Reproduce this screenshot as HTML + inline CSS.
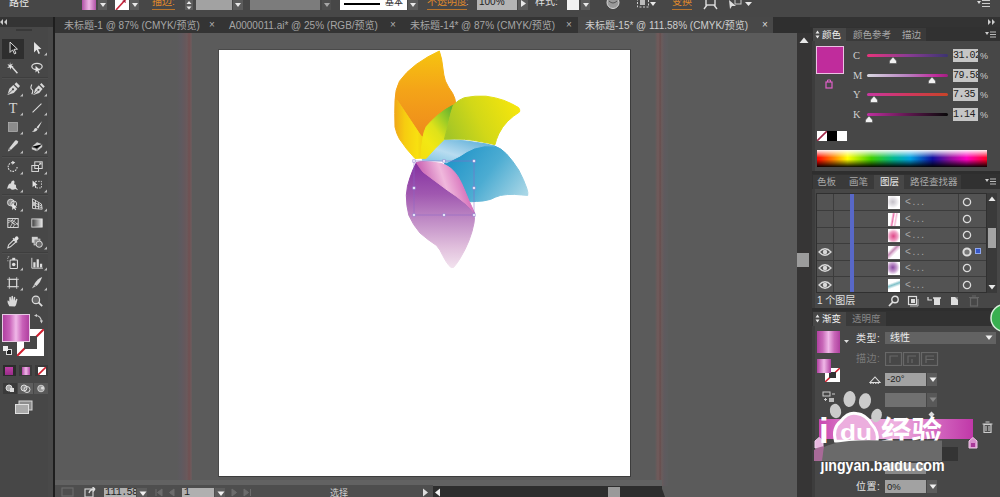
<!DOCTYPE html>
<html lang="zh">
<head>
<meta charset="utf-8">
<title>Illustrator</title>
<style>
html,body{margin:0;padding:0;}
body{width:1000px;height:497px;overflow:hidden;position:relative;background:#5b5b5b;font-family:"Liberation Sans","Noto Sans CJK SC",sans-serif;font-size:11px;color:#d6d6d6;}
.abs{position:absolute;}
#ctrl{left:0;top:0;width:1000px;height:17px;background:#474747;}
#tabs{left:54px;top:17px;width:746px;height:16px;background:#343434;}
#tools{left:0;top:17px;width:48px;height:480px;background:#474747;border-right:5px solid #494949;}
#toolsTop{left:0;top:17px;width:53px;height:10px;background:#343434;}
#tooldiv{left:52.5px;top:17px;width:2.5px;height:480px;background:#1e1e1e;}
#canvas{left:55px;top:33px;width:742px;height:452px;background:#5b5b5b;}
#artboard{left:218px;top:49px;width:411px;height:426px;background:#fff;border:1px solid #3c3c3c;border-left-color:#4a4a4a;border-top-color:#4a4a4a;}
.guide{width:10px;top:33px;height:453px;}
#status{left:55px;top:485px;width:607px;height:12px;background:#2e2e2e;}
#vscroll{left:797px;top:33px;width:15px;height:464px;background:#363535;}
#right{left:812px;top:17px;width:188px;height:480px;background:#474747;}
.tab{top:17.5px;height:15px;line-height:16px;font-size:10px;color:#a6a6a6;white-space:nowrap;}

.cb{position:absolute;top:0;height:10px;}
.dd{position:absolute;top:0;height:10px;background:#5c5c5c;}
.dd:after{content:"";position:absolute;left:50%;top:3px;margin-left:-3px;border-left:3px solid transparent;border-right:3px solid transparent;border-top:4px solid #e8e8e8;}
.org{position:absolute;top:-5px;height:14px;line-height:14px;font-size:10px;color:#e08a2c;white-space:nowrap;border-bottom:1px solid #b8742c;}
.ctl{position:absolute;top:-5px;height:14px;line-height:14px;font-size:10px;color:#e0e0e0;white-space:nowrap;}
.tabx{position:absolute;top:17px;height:15px;line-height:16px;font-size:10px;color:#b0b0b0;}

.pt{position:absolute;font-size:9.5px;line-height:13px;height:13px;white-space:nowrap;color:#a8a8a8;}
.pt.on{color:#f0f0f0;}
.sl{position:absolute;left:867px;width:81px;height:3px;border-radius:2px;}
.vb{position:absolute;left:953px;width:25px;height:13px;background:#c6c6c6;color:#222;font-size:10px;line-height:13px;overflow:hidden;white-space:nowrap;font-family:"Liberation Mono","Noto Sans CJK SC",monospace;letter-spacing:-0.5px;}
.lab{position:absolute;left:853px;font-size:10.5px;line-height:12px;color:#cfcfcf;font-weight:normal;font-family:"Liberation Serif","Noto Serif CJK SC",serif;}
.pc{position:absolute;left:980px;font-size:9px;line-height:12px;color:#ccc;}
.hd{position:absolute;width:0;height:0;}
</style>
</head>
<body>
<div id="canvas" class="abs"></div>
<div class="abs guide" style="left:177px;width:16px;background:linear-gradient(90deg,#5b5b5b 0%,#5e5a60 25%,#66585c 50%,#6a5a5c 62%,#705052 76%,#6e5a5c 88%,#5b5b5b 97%);"></div>
<div class="abs guide" style="left:655px;width:14px;background:linear-gradient(90deg,#5b5b5b 0%,#6e5a5a 16%,#6e5a5a 26%,#684e4e 37%,#6a5c5c 48%,#605a5e 65%,#5c5c5e 85%,#5b5b5b 100%);"></div>
<div id="artboard" class="abs"></div>
<!--ART-->
<svg class="abs" style="left:380px;top:40px" width="170" height="240" viewBox="380 40 170 240">
<defs>
<linearGradient id="gOr" x1="0" y1="0" x2="0" y2="1"><stop offset="0" stop-color="#f6c410"/><stop offset="0.45" stop-color="#f4a418"/><stop offset="1" stop-color="#ee8a1c"/></linearGradient>
<linearGradient id="gYf" x1="0" y1="0" x2="1" y2="0"><stop offset="0" stop-color="#f0a818"/><stop offset="0.35" stop-color="#f6cc10"/><stop offset="0.8" stop-color="#f8e010"/><stop offset="1" stop-color="#f0d010"/></linearGradient>
<linearGradient id="gGr" x1="0" y1="0.6" x2="1" y2="0.3"><stop offset="0" stop-color="#a4c626"/><stop offset="0.45" stop-color="#d2d818"/><stop offset="1" stop-color="#f6e60c"/></linearGradient>
<linearGradient id="gGf" x1="0.9" y1="0" x2="0.1" y2="1"><stop offset="0" stop-color="#62b030"/><stop offset="0.25" stop-color="#9ccc26"/><stop offset="0.5" stop-color="#dee21a"/><stop offset="0.75" stop-color="#f2e814"/><stop offset="1" stop-color="#f4e010"/></linearGradient>
<linearGradient id="gBl" x1="0" y1="0.3" x2="1" y2="0.8"><stop offset="0" stop-color="#2094c8"/><stop offset="0.5" stop-color="#4cacd2"/><stop offset="1" stop-color="#a8d6e6"/></linearGradient>
<linearGradient id="gBf" x1="0" y1="1" x2="1" y2="0"><stop offset="0" stop-color="#78c0e0"/><stop offset="0.4" stop-color="#b8dcf0"/><stop offset="1" stop-color="#50a8d4"/></linearGradient>
<linearGradient id="gPu" x1="0" y1="0" x2="0" y2="1"><stop offset="0" stop-color="#8430a0"/><stop offset="0.3" stop-color="#a058b0"/><stop offset="0.55" stop-color="#c08cc6"/><stop offset="0.8" stop-color="#e0bedc"/><stop offset="1" stop-color="#f2e2ee"/></linearGradient>
<linearGradient id="gPk" x1="0" y1="0.6" x2="1" y2="0.3"><stop offset="0" stop-color="#b83ca0"/><stop offset="0.5" stop-color="#f0b8dc"/><stop offset="1" stop-color="#c848a8"/></linearGradient>
</defs>
<!-- blue face -->
<path d="M446 163 Q452 160 460 156 Q467 151 474.5 148 Q485 144.5 494.5 146 Q501 148 506.6 154 Q513 161 518.7 170 Q524 180 526.7 188 Q528.5 193 527.7 195.4 Q522 195 514.6 194.4 Q507 194.2 500.5 195.4 Q495 197 490.5 199.4 Q483 201.5 476.4 201.4 Q471 202 468.5 201.5 Q465 196 462.5 190.4 Q459.5 183 456.5 177 Q454 171.5 451 168.5 L444 164 Z" fill="url(#gBl)" stroke="url(#gBl)" stroke-width="1" stroke-linejoin="round"/>
<!-- blue fold -->
<path d="M422 160 Q426 154 432 148 Q438 142 444.2 140 Q455 139.5 466.3 141 Q477 142.5 486.5 144 L494.5 146 Q485 144.5 474.5 148 Q467 151 460 156 Q452 160 446 163 L444 161 Z" fill="url(#gBf)" stroke="url(#gBf)" stroke-width="1" stroke-linejoin="round"/>
<!-- orange -->
<path d="M439.3 51 Q428 56 416.4 64.3 Q406 72 399.5 81.2 Q395 90 395 100.5 L397 100 L421 136 L424 137 L431 125 Q443 114 456 106 Q455.5 98 452.6 93.3 Q448 87 445.4 81 Q443.5 75 443 69 Q442 58 439.3 51 Z" fill="url(#gOr)" stroke="url(#gOr)" stroke-width="1" stroke-linejoin="round"/>
<!-- yellow fold -->
<path d="M395 100.5 Q394.5 113 395 127 Q396.5 134 399.5 139 Q406 149 415 158.5 L423 158 L423 137 L421 136 L397 100 Z" fill="url(#gYf)" stroke="url(#gYf)" stroke-width="1" stroke-linejoin="round"/>
<!-- green fold -->
<path d="M453.4 105 Q445 109 437 115.8 Q431 121 426.3 126.6 Q423.5 132 422.7 139.3 Q421 148 421 158 L426 158.5 Q434 149 444.4 139.3 Q447 130 449 121 Q451 112 453.4 105 Z" fill="url(#gGf)" stroke="url(#gGf)" stroke-width="1" stroke-linejoin="round"/>
<!-- green face -->
<path d="M453.4 105 Q458 100 464.3 97.7 Q475 95.5 486 96.2 Q496 97.5 504 100.4 Q512 103.5 518.6 107.6 Q520.5 110 519.5 112 Q513 116 507.7 121.2 Q502 127 498.7 134 Q496 140 495 144.7 Q489 143 482.4 142 Q473 140 464.3 139.3 Q454 138.8 444.4 139.3 Q447 130 449 121 Q451 112 453.4 105 Z" fill="url(#gGr)" stroke="url(#gGr)" stroke-width="1" stroke-linejoin="round"/>
<!-- purple -->
<path d="M416.4 162.6 Q412.5 170 410 177.6 Q406.8 186 406.3 195.2 Q406.3 206 408.8 215.3 Q413 225 420 233 Q428 240 436.5 245.5 Q440.5 250 442.7 255.5 Q446 262 449 265.6 Q451 268.5 453.5 267.5 Q457.5 263 460.3 258 Q465.5 249.5 469 240.5 Q472.5 231.5 474 222.9 Q474.8 217 474.4 213 Q470 207.5 465.3 203.3 Q456.5 196 447.2 190 Q435 181 423 172 Q419 167 416.4 162.6 Z" fill="url(#gPu)" stroke="url(#gPu)" stroke-width="1" stroke-linejoin="round"/>
<!-- pink fold -->
<path d="M416.4 162.6 Q419 161.6 423 161.6 Q433 161.8 441.2 163.4 Q446.5 165 450.8 168.3 Q455 172 458 176.7 Q461.5 182.5 464 188.8 Q466.5 195 469 200.8 Q472 207 474.4 213 Q470 207.5 465.3 203.3 Q456.5 196 447.2 190 Q435 181 423 172 Q419 167 416.4 162.6 Z" fill="url(#gPk)" stroke="url(#gPk)" stroke-width="1" stroke-linejoin="round"/>
<!-- selection -->
<rect x="414" y="161" width="60" height="54" fill="none" stroke="#8a68c8" stroke-width="0.7" stroke-opacity="0.75"/>
<g fill="#fff" stroke="#8a7ad0" stroke-width="0.7" stroke-opacity="0.8"><rect x="412.8" y="159.8" width="2.4" height="2.4"/><rect x="442.8" y="159.8" width="2.4" height="2.4"/><rect x="472.8" y="159.8" width="2.4" height="2.4"/><rect x="412.8" y="186.8" width="2.4" height="2.4"/><rect x="472.8" y="186.8" width="2.4" height="2.4"/><rect x="412.8" y="213.8" width="2.4" height="2.4"/><rect x="442.8" y="213.8" width="2.4" height="2.4"/><rect x="472.8" y="213.8" width="2.4" height="2.4"/></g>
</svg>
<!--/ART-->
<div id="ctrl" class="abs">
<div class="ctl" style="left:9px;top:-4px;font-size:10px;color:#ececec;">路径</div>
<div class="cb" style="left:82px;width:14px;background:linear-gradient(90deg,#b052a6 0%,#f0b6e6 50%,#b052a6 100%);"></div>
<div class="dd" style="left:98px;width:9px;"></div>
<div class="cb" style="left:115px;width:14px;background:#fff;overflow:hidden;"><svg width="14" height="10" viewBox="0 0 14 10" style="position:absolute;left:0;top:0"><line x1="1" y1="10" x2="11" y2="-1" stroke="#c8283c" stroke-width="1.6"/><path d="M7 1 L10 0 L11 3 Z" fill="#a01838"/></svg></div>
<div class="dd" style="left:130px;width:9px;"></div>
<div class="org" style="left:152px;">描边:</div>
<div class="cb" style="left:185px;width:8px;background:#5c5c5c;"><svg width="8" height="10" style="position:absolute;left:0;top:0"><path d="M1.5 4 L4 1 L6.5 4 Z M1.5 6.5 L4 9.5 L6.5 6.5 Z" fill="#e8e8e8"/></svg></div>
<div class="cb" style="left:196px;width:36px;background:#a2a2a2;"></div>
<div class="dd" style="left:233px;width:10px;"></div>
<div class="cb" style="left:250px;width:70px;background:#7c7c7c;"></div>
<div class="dd" style="left:322px;width:9px;background:#555;opacity:.6"></div>
<div class="cb" style="left:340px;width:67px;background:#fff;"><div style="position:absolute;left:4px;top:3px;width:36px;height:2px;background:#000"></div><div style="position:absolute;left:45px;top:-5px;font-size:9px;line-height:14px;color:#222;white-space:nowrap;">基本</div></div>
<div class="dd" style="left:408px;width:10px;"></div>
<div class="org" style="left:427px;">不透明度</div><div class="ctl" style="left:466px;color:#bbb">:</div>
<div class="cb" style="left:477px;width:40px;background:#b4b4b4;"><div style="position:absolute;left:2px;top:-5px;font-size:10px;line-height:14px;color:#222;">100%</div></div>
<div class="cb" style="left:518px;width:10px;background:#5c5c5c;"><svg width="10" height="10" style="position:absolute;left:0;top:0"><path d="M3 0 L8 3.5 L3 7 Z" fill="#e8e8e8"/></svg></div>
<div class="ctl" style="left:535px;">样式:</div>
<div class="cb" style="left:567px;width:12px;background:#f2f2f2;"></div>
<div class="dd" style="left:581px;width:9px;"></div>
<svg class="abs" style="left:606px;top:0" width="14" height="10"><circle cx="7" cy="2.5" r="6" fill="#9a9a9a" stroke="#d8d8d8" stroke-width="1"/><path d="M3 1 Q7 5 11 1" stroke="#555" fill="none"/></svg>
<svg class="abs" style="left:636px;top:0" width="22" height="10"><rect x="1.5" y="-3" width="11" height="10" fill="none" stroke="#d0d0d0" stroke-dasharray="2 1.5"/><rect x="4" y="0" width="5" height="5" fill="#bbb"/><path d="M14 2 L20 2 L17 6 Z" fill="#e8e8e8"/></svg>
<div class="org" style="left:672px;">变换</div>
<svg class="abs" style="left:703px;top:0" width="16" height="10"><rect x="3" y="-3" width="9" height="8" fill="none" stroke="#ddd" stroke-width="1.4"/><path d="M1 9 L4 5 M14 9 L11 5" stroke="#ddd" stroke-width="1.4"/></svg>
<svg class="abs" style="left:727px;top:0" width="28" height="10"><path d="M2 0 L9 6 L5 6 L3 9 Z" fill="#ddd"/><rect x="8" y="-2" width="6" height="6" fill="none" stroke="#ccc"/><path d="M18 2 L25 2 L21.5 6 Z" fill="#e8e8e8"/></svg>
<svg class="abs" style="left:977px;top:-1px" width="14" height="10"><path d="M0 2 L4 2 L2 5 Z" fill="#ddd"/><path d="M5 1.5 H13 M5 4.5 H13 M5 7.5 H13" stroke="#ccc" stroke-width="1"/></svg>
</div>
<div id="tabs" class="abs"></div>
<div class="abs" style="left:578px;top:17px;width:195px;height:16px;background:#484848;"></div>
<div class="abs" style="left:773px;top:17px;width:39px;height:16px;background:#2f2f2f;"></div>
<div class="tab abs" style="left:64px;">未标题-1 @ 87% (CMYK/预览)</div><div class="tabx" style="left:209px;">×</div>
<div class="tab abs" style="left:229px;">A0000011.ai* @ 25% (RGB/预览)</div><div class="tabx" style="left:390px;">×</div>
<div class="tab abs" style="left:410px;">未标题-14* @ 87% (CMYK/预览)</div><div class="tabx" style="left:566px;">×</div>
<div class="tab abs" style="left:585px;color:#cfcfcf">未标题-15* @ 111.58% (CMYK/预览)</div><div class="tabx" style="left:762px;color:#dcdcdc">×</div>

<div id="tools" class="abs"></div>
<div id="toolsTop" class="abs"></div>
<div id="tooldiv" class="abs"></div>
<!--TOOLS-->
<svg class="abs" style="left:0;top:19px" width="8" height="6"><path d="M3 0 L0 3 L3 6 Z M7 0 L4 3 L7 6 Z" fill="#ccc"/></svg>
<div class="abs" style="left:2px;top:77px;width:46px;height:1px;background:#3e3e3e;"></div><div class="abs" style="left:2px;top:78px;width:46px;height:1px;background:#4e4e4e;"></div><div class="abs" style="left:2px;top:156px;width:46px;height:1px;background:#3e3e3e;"></div><div class="abs" style="left:2px;top:157px;width:46px;height:1px;background:#4e4e4e;"></div><div class="abs" style="left:2px;top:194px;width:46px;height:1px;background:#3e3e3e;"></div><div class="abs" style="left:2px;top:195px;width:46px;height:1px;background:#4e4e4e;"></div><div class="abs" style="left:2px;top:252px;width:46px;height:1px;background:#3e3e3e;"></div><div class="abs" style="left:2px;top:253px;width:46px;height:1px;background:#4e4e4e;"></div>
<div class="abs" style="left:2px;top:39px;width:22px;height:20px;background:#2e2e2e;"></div>
<div class="abs" style="left:16px;top:29px;width:16px;height:2px;background:#383838;"></div>
<svg class="abs" style="left:3px;top:39.0px" width="22" height="19" viewBox="0 0 22 19"><g transform="translate(10 9) scale(0.74) translate(-10 -9)"><path d="M6 1 L6 15 L9.5 11.5 L12 17 L14 16 L11.5 10.8 L16 10.5 Z" fill="#222" stroke="#f0f0f0" stroke-width="1.2"/></g></svg>
<svg class="abs" style="left:27px;top:39.0px" width="22" height="19" viewBox="0 0 22 19"><g transform="translate(10 9) scale(0.74) translate(-10 -9)"><path d="M6 1 L6 15 L9.5 11.5 L12 17 L14 16 L11.5 10.8 L16 10.5 Z" fill="#e4e4e4"/></g><path d="M20 13.5 L20 16.5 L17 16.5 Z" fill="#bdbdbd"/></svg>
<svg class="abs" style="left:3px;top:59.0px" width="22" height="19" viewBox="0 0 22 19"><g transform="translate(10 9) scale(0.74) translate(-10 -9)"><path d="M8 7 L16 16" stroke="#ddd" stroke-width="2"/><path d="M6 1 L6.8 4.5 L10 3 L8 6 L11 7.5 L7.5 8 L7 11.5 L5.5 8.3 L2 9 L4.5 6.5 L2.5 3.5 L5.5 4.8 Z" fill="#e4e4e4"/></g></svg>
<svg class="abs" style="left:27px;top:59.0px" width="22" height="19" viewBox="0 0 22 19"><g transform="translate(10 9) scale(0.74) translate(-10 -9)"><ellipse cx="10" cy="7" rx="7" ry="4.2" fill="none" stroke="#ddd" stroke-width="1.6"/><path d="M8 6 L8 15 L10.3 12.8 L12 16.5 L13.5 15.8 L11.8 12.2 L14.5 12 Z" fill="#e4e4e4"/></g></svg>
<svg class="abs" style="left:3px;top:80.0px" width="22" height="19" viewBox="0 0 22 19"><g transform="translate(10 9) scale(0.74) translate(-10 -9)"><path d="M2.5 17 L5 8.5 L10.5 3.5 L16 9 L11 14.5 Z" fill="#d8d8d8"/><path d="M12 2.5 L14.5 0 L19.5 5 L17 7.5 Z" fill="#d8d8d8"/><path d="M3.5 16 L9 10.5" stroke="#474747" stroke-width="1.1"/><circle cx="10" cy="9.5" r="1.5" fill="#474747"/></g><path d="M20 13.5 L20 16.5 L17 16.5 Z" fill="#bdbdbd"/></svg>
<svg class="abs" style="left:27px;top:80.0px" width="22" height="19" viewBox="0 0 22 19"><g transform="translate(10 9) scale(0.74) translate(-10 -9)"><path d="M5 17 L7.5 9 L12.5 4 L17.5 9 L13 14.5 Z" fill="#d8d8d8"/><path d="M14 3 L16 1 L20.5 5.5 L18.5 7.5 Z" fill="#d8d8d8"/><path d="M6 16 L11 11" stroke="#474747" stroke-width="1.1"/><circle cx="12" cy="10" r="1.4" fill="#474747"/><path d="M3 3 Q0.5 8 3 9.5 Q5.5 11 3 16" stroke="#ddd" stroke-width="1.5" fill="none"/></g><path d="M20 13.5 L20 16.5 L17 16.5 Z" fill="#bdbdbd"/></svg>
<svg class="abs" style="left:3px;top:99.0px" width="22" height="19" viewBox="0 0 22 19"><g transform="translate(10 9) scale(0.74) translate(-10 -9)"><text x="10" y="15.5" font-family="Liberation Serif,serif" font-size="19" fill="#d4d4d4" text-anchor="middle">T</text></g><path d="M20 13.5 L20 16.5 L17 16.5 Z" fill="#bdbdbd"/></svg>
<svg class="abs" style="left:27px;top:99.0px" width="22" height="19" viewBox="0 0 22 19"><g transform="translate(10 9) scale(0.74) translate(-10 -9)"><path d="M4 15 L16 3" stroke="#ddd" stroke-width="1.4"/></g><path d="M20 13.5 L20 16.5 L17 16.5 Z" fill="#bdbdbd"/></svg>
<svg class="abs" style="left:3px;top:118.0px" width="22" height="19" viewBox="0 0 22 19"><g transform="translate(10 9) scale(0.74) translate(-10 -9)"><rect x="4" y="3" width="12" height="12" fill="#8c8c8c" stroke="#b4b4b4" stroke-width="1"/></g><path d="M20 13.5 L20 16.5 L17 16.5 Z" fill="#bdbdbd"/></svg>
<svg class="abs" style="left:27px;top:118.0px" width="22" height="19" viewBox="0 0 22 19"><g transform="translate(10 9) scale(0.74) translate(-10 -9)"><path d="M17 1 L9.5 9.5 L11.5 11.2 Z" fill="#e4e4e4"/><path d="M9 10.3 L10.8 12 Q9 16 3 15.5 Q6.5 14 6.5 11.5 Q7.5 10 9 10.3 Z" fill="#d8d8d8"/></g><path d="M20 13.5 L20 16.5 L17 16.5 Z" fill="#bdbdbd"/></svg>
<svg class="abs" style="left:3px;top:137.0px" width="22" height="19" viewBox="0 0 22 19"><g transform="translate(10 9) scale(0.74) translate(-10 -9)"><path d="M13 1.5 Q15 0.5 16.5 2.5 Q17.5 4 16 5.5 L7 14.5 L3 16.5 L4.5 12.5 Z" fill="#d8d8d8"/><path d="M4.5 12.5 L7 14.5" stroke="#474747"/></g><path d="M20 13.5 L20 16.5 L17 16.5 Z" fill="#bdbdbd"/></svg>
<svg class="abs" style="left:27px;top:137.0px" width="22" height="19" viewBox="0 0 22 19"><g transform="translate(10 9) scale(0.74) translate(-10 -9)"><path d="M3 10 L10 4 L17 6.5 L17 10.5 L10 16 L3 13.5 Z" fill="#d0d0d0"/><path d="M3 10 L10 12.5 L17 6.5 M10 12.5 L10 16" stroke="#474747" stroke-width="1"/></g><path d="M20 13.5 L20 16.5 L17 16.5 Z" fill="#bdbdbd"/></svg>
<svg class="abs" style="left:3px;top:157.5px" width="22" height="19" viewBox="0 0 22 19"><g transform="translate(10 9) scale(0.74) translate(-10 -9)"><path d="M15.5 9 A6 6 0 1 1 10 3" fill="none" stroke="#ddd" stroke-width="1.5" stroke-dasharray="2.2 1.4"/><path d="M9 0.5 L13 3 L9 5.8 Z" fill="#e4e4e4"/></g><path d="M20 13.5 L20 16.5 L17 16.5 Z" fill="#bdbdbd"/></svg>
<svg class="abs" style="left:27px;top:157.5px" width="22" height="19" viewBox="0 0 22 19"><g transform="translate(10 9) scale(0.74) translate(-10 -9)"><rect x="3" y="7" width="9" height="8" fill="none" stroke="#ddd" stroke-width="1.3"/><rect x="7" y="2" width="10" height="9" fill="none" stroke="#ddd" stroke-width="1.3"/><path d="M12 7 L15.5 3.5 M15.5 3.5 L12.8 3.8 M15.5 3.5 L15.2 6.2" stroke="#ddd" stroke-width="1.2"/></g><path d="M20 13.5 L20 16.5 L17 16.5 Z" fill="#bdbdbd"/></svg>
<svg class="abs" style="left:3px;top:175.7px" width="22" height="19" viewBox="0 0 22 19"><g transform="translate(10 9) scale(0.74) translate(-10 -9)"><path d="M2 14 Q4 6 7 7 Q8 2 11 3 Q13 4 11.5 8 Q15 8 14 12 L17 16 L13 14.5 Q9 17 6 13.5 Z" fill="#d8d8d8"/></g><path d="M20 13.5 L20 16.5 L17 16.5 Z" fill="#bdbdbd"/></svg>
<svg class="abs" style="left:27px;top:175.7px" width="22" height="19" viewBox="0 0 22 19"><g transform="translate(10 9) scale(0.74) translate(-10 -9)"><path d="M4 3 L4 12 L6.5 9.8 L8 13 L9.5 12.3 L8 9.2 L10.8 9 Z" fill="#e4e4e4"/><rect x="8" y="4" width="8" height="9" fill="none" stroke="#ddd" stroke-width="1.2" stroke-dasharray="2 1.6"/></g><path d="M20 13.5 L20 16.5 L17 16.5 Z" fill="#bdbdbd"/></svg>
<svg class="abs" style="left:3px;top:195.4px" width="22" height="19" viewBox="0 0 22 19"><g transform="translate(10 9) scale(0.74) translate(-10 -9)"><circle cx="7" cy="7" r="4.5" fill="#8a8a8a" stroke="#ddd" stroke-width="1.2"/><circle cx="11" cy="9" r="4" fill="none" stroke="#ddd" stroke-width="1.2"/><path d="M9 8 L9 17 L11.3 14.8 L13 17.5 L14.3 16.8 L12.8 14 L15.5 13.8 Z" fill="#e8e8e8"/></g><path d="M20 13.5 L20 16.5 L17 16.5 Z" fill="#bdbdbd"/></svg>
<svg class="abs" style="left:27px;top:195.4px" width="22" height="19" viewBox="0 0 22 19"><g transform="translate(10 9) scale(0.74) translate(-10 -9)"><path d="M4 2 L4 15 L17 16 M4 6 L16 11.5 M4 10.5 L16.5 13.8 M8 4 L8 15.3 M12 7 L12 15.6 M4 2 L16 9 L17 16" stroke="#ddd" stroke-width="1.2" fill="none"/><path d="M4 6 L8 7.8 L8 11.5 L4 10.5 Z" fill="#c0c0c0"/></g><path d="M20 13.5 L20 16.5 L17 16.5 Z" fill="#bdbdbd"/></svg>
<svg class="abs" style="left:3px;top:214.4px" width="22" height="19" viewBox="0 0 22 19"><g transform="translate(10 9) scale(0.74) translate(-10 -9)"><rect x="3" y="3" width="14" height="12" fill="none" stroke="#ddd" stroke-width="1.3"/><path d="M3 9 Q7 5 10 9 Q13 13 17 9 M10 3 Q6 7 10 9 Q14 11 10 15 M3 6 Q10 3 17 12 M6 15 Q9 8 14 3" stroke="#ddd" stroke-width="1" fill="none"/></g></svg>
<svg class="abs" style="left:27px;top:214.4px" width="22" height="19" viewBox="0 0 22 19"><g transform="translate(10 9) scale(0.74) translate(-10 -9)"><defs><linearGradient id="tg" x1="0" x2="1"><stop offset="0" stop-color="#3a3a3a"/><stop offset="1" stop-color="#e8e8e8"/></linearGradient></defs><rect x="3" y="3.5" width="14" height="11" fill="url(#tg)" stroke="#ddd" stroke-width="1.2"/></g></svg>
<svg class="abs" style="left:3px;top:233.0px" width="22" height="19" viewBox="0 0 22 19"><g transform="translate(10 9) scale(0.74) translate(-10 -9)"><path d="M13.5 2 Q15.5 0.5 17 2.5 Q18.5 4.5 16.5 6 L14.5 8 L11.5 5 Z" fill="#e4e4e4"/><path d="M11 6 L14 9 L6.5 15.5 L3 17 L4 13 Z" fill="none" stroke="#ddd" stroke-width="1.4"/><path d="M10 4 L15.5 9.5" stroke="#ddd" stroke-width="1.8"/></g></svg>
<svg class="abs" style="left:27px;top:233.0px" width="22" height="19" viewBox="0 0 22 19"><g transform="translate(10 9) scale(0.74) translate(-10 -9)"><rect x="3" y="2" width="8" height="8" fill="#d0d0d0"/><rect x="6" y="5" width="8" height="8" fill="#8a8a8a" stroke="#ddd" stroke-width="1"/><circle cx="13" cy="12" r="4.2" fill="#6a6a6a" stroke="#ddd" stroke-width="1.3"/></g><path d="M20 13.5 L20 16.5 L17 16.5 Z" fill="#bdbdbd"/></svg>
<svg class="abs" style="left:3px;top:254.3px" width="22" height="19" viewBox="0 0 22 19"><g transform="translate(10 9) scale(0.74) translate(-10 -9)"><rect x="6" y="5" width="10" height="11.5" rx="1" fill="none" stroke="#ddd" stroke-width="1.4"/><rect x="9" y="2" width="4" height="3" fill="#ddd"/><circle cx="11" cy="11" r="2.4" fill="#ddd"/><path d="M2 3 L4 2 M2 6 L4 6 M3 0.5 L5 0.5" stroke="#bbb" stroke-width="1"/></g><path d="M20 13.5 L20 16.5 L17 16.5 Z" fill="#bdbdbd"/></svg>
<svg class="abs" style="left:27px;top:254.3px" width="22" height="19" viewBox="0 0 22 19"><g transform="translate(10 9) scale(0.74) translate(-10 -9)"><path d="M3 2 L3 16 L18 16" stroke="#ddd" stroke-width="1.2" fill="none"/><rect x="5" y="8" width="3" height="7" fill="#ddd"/><rect x="9.5" y="4" width="3" height="11" fill="#ddd"/><rect x="14" y="10" width="3" height="5" fill="#ddd"/></g><path d="M20 13.5 L20 16.5 L17 16.5 Z" fill="#bdbdbd"/></svg>
<svg class="abs" style="left:3px;top:274.0px" width="22" height="19" viewBox="0 0 22 19"><g transform="translate(10 9) scale(0.74) translate(-10 -9)"><rect x="5" y="4" width="10" height="10" fill="none" stroke="#ddd" stroke-width="1.3"/><path d="M2 4 H18 M2 14 H18 M5 1 V17 M15 1 V17" stroke="#ddd" stroke-width="1"/></g><path d="M20 13.5 L20 16.5 L17 16.5 Z" fill="#bdbdbd"/></svg>
<svg class="abs" style="left:27px;top:274.0px" width="22" height="19" viewBox="0 0 22 19"><g transform="translate(10 9) scale(0.74) translate(-10 -9)"><path d="M17 1 Q11 3 6 11 L9.5 13 Q15 8 17 1 Z" fill="#d8d8d8"/><path d="M6 11.5 L3 16.5 L8.5 13.5 Z" fill="#c8c8c8"/></g><path d="M20 13.5 L20 16.5 L17 16.5 Z" fill="#bdbdbd"/></svg>
<svg class="abs" style="left:3px;top:292.0px" width="22" height="19" viewBox="0 0 22 19"><g transform="translate(10 9) scale(0.74) translate(-10 -9)"><path d="M5 16 Q2 11 2.5 8.5 Q3.5 7.5 5 10 L5 4 Q6 2.5 7 4 L7.5 8 L8 2.5 Q9 1 10 2.5 L10.3 8 L11.3 3.5 Q12.3 2.5 13 4 L12.8 9 L14.5 6 Q15.8 5.5 16 7 L14.5 13 Q14 15.5 12.5 16.5 Z" fill="#d8d8d8"/></g></svg>
<svg class="abs" style="left:27px;top:292.0px" width="22" height="19" viewBox="0 0 22 19"><g transform="translate(10 9) scale(0.74) translate(-10 -9)"><circle cx="8.5" cy="7.5" r="5" fill="#6a6a6a" stroke="#ddd" stroke-width="1.6"/><path d="M12 11 L17 16" stroke="#ddd" stroke-width="2.4"/></g></svg>
<!--/TOOLS-->
<!--FILLSTROKE-->
<div class="abs" style="left:17px;top:329px;width:27px;height:27px;background:#fff;overflow:hidden;"><svg width="27" height="27" style="position:absolute;left:0;top:0"><line x1="0" y1="27" x2="27" y2="0" stroke="#d02030" stroke-width="2"/></svg><div style="position:absolute;left:7px;top:7px;width:13px;height:13px;background:#474747;"></div></div>
<div class="abs" style="left:2px;top:314px;width:28px;height:28px;background:linear-gradient(90deg,#b040a0 0%,#c860b8 25%,#f0b8e8 50%,#c860b8 75%,#b040a0 100%);border:1px solid #e8c8e4;box-sizing:border-box;"></div>
<svg class="abs" style="left:34px;top:314px" width="10" height="10"><path d="M1.5 1.5 Q7 1.5 7.5 8" fill="none" stroke="#ccc" stroke-width="1.2"/><path d="M0 1.5 L3 0 L3 3 Z M7.5 9.5 L6 6.5 L9 6.5 Z" fill="#ccc"/></svg>
<div class="abs" style="left:6px;top:349px;width:4px;height:4px;border:1px solid #ddd;background:#222;"></div><div class="abs" style="left:3px;top:346px;width:5px;height:5px;background:#eee;"></div>
<div class="abs" style="left:3px;top:365px;width:13px;height:11px;background:#2c2c2c;"><div style="position:absolute;left:2px;top:1.5px;width:8px;height:8px;background:linear-gradient(180deg,#c040a8,#982c88);"></div></div>
<div class="abs" style="left:19px;top:365px;width:13px;height:11px;background:#3a3a3a;"><div style="position:absolute;left:2.5px;top:1.5px;width:8px;height:8px;background:linear-gradient(90deg,#b048a4,#f0b8e8,#b048a4);"></div></div>
<div class="abs" style="left:35px;top:365px;width:13px;height:11px;background:#3a3a3a;"><div style="position:absolute;left:2.5px;top:1.5px;width:8px;height:8px;background:#fff;overflow:hidden"><svg width="8" height="8" style="position:absolute;left:0;top:0"><line x1="0" y1="8" x2="8" y2="0" stroke="#d02030" stroke-width="1.6"/></svg></div></div>
<div class="abs" style="left:3px;top:383px;width:14px;height:11px;background:#3a3a3a;"></div>
<div class="abs" style="left:18px;top:383px;width:15px;height:11px;background:#5e5e5e;"></div>
<div class="abs" style="left:34px;top:383px;width:14px;height:11px;background:#585858;"></div>
<svg class="abs" style="left:3px;top:383px" width="46" height="11"><circle cx="6" cy="5" r="3" fill="#aaa" stroke="#ddd"/><rect x="7" y="5" width="4" height="4" fill="#ddd"/><circle cx="21" cy="5" r="3" fill="#888" stroke="#ddd"/><circle cx="24" cy="6.5" r="3" fill="none" stroke="#ddd"/><circle cx="38" cy="5.5" r="3.3" fill="#999" stroke="#ccc"/><circle cx="39.5" cy="5" r="1.5" fill="#ddd"/></svg>
<svg class="abs" style="left:14px;top:400px" width="20" height="16"><rect x="5" y="1" width="13" height="9" fill="#8c8c8c" stroke="#d8d8d8"/><rect x="1.5" y="4.5" width="13" height="9" fill="#aaa" stroke="#e0e0e0"/></svg>
<!--/FILLSTROKE-->

<div id="status" class="abs"></div>
<!--STATUS-->
<div class="abs" style="left:55px;top:480px;width:607px;height:6px;background:#626262;"></div>
<div class="abs" style="left:55px;top:485px;width:378px;height:12px;background:#4e4e4e;"></div>
<svg class="abs" style="left:433px;top:486px" width="234" height="11"><path d="M0 0 H228 L232 11 H0 Z" fill="#2e2e2e"/></svg>
<svg class="abs" style="left:60px;top:487px" width="40" height="10"><rect x="2" y="1" width="11" height="8" fill="none" stroke="#6a6a6a" stroke-width="1.2"/><rect x="25" y="2" width="8" height="8" fill="none" stroke="#ccc" stroke-width="1.2"/><path d="M29 6 Q30 2 35 2 M35 2 L32.5 0 M35 2 L33 4.5" stroke="#ddd" stroke-width="1.3" fill="none"/></svg>
<div class="abs" style="left:104px;top:488px;width:32px;height:9px;background:#b0b0b0;overflow:hidden;"><div style="position:absolute;left:1px;top:-1px;font-size:10px;line-height:12px;color:#222;font-family:'Liberation Mono',monospace;letter-spacing:-0.6px;">111.58</div></div>
<div class="abs" style="left:137px;top:488px;width:10px;height:9px;background:#5c5c5c;"><svg style="position:absolute;left:1.5px;top:3px" width="8" height="6"><path d="M0.5 0.5 L7.5 0.5 L4 5 Z" fill="#f0f0f0"/></svg></div>
<svg class="abs" style="left:152px;top:488px" width="26" height="9"><path d="M4 1 V8 M10 1 L5.5 4.5 L10 8 Z M22 1 L17.5 4.5 L22 8 Z" fill="#6c6c6c" stroke="#6c6c6c" stroke-width="1"/></svg>
<div class="abs" style="left:182px;top:488px;width:32px;height:9px;background:#b0b0b0;overflow:hidden;"><div style="position:absolute;left:2px;top:-1px;font-size:10px;line-height:12px;color:#222;font-family:'Liberation Mono',monospace;">1</div></div>
<div class="abs" style="left:215px;top:488px;width:10px;height:9px;background:#5c5c5c;"><svg style="position:absolute;left:1.5px;top:3px" width="8" height="6"><path d="M0.5 0.5 L7.5 0.5 L4 5 Z" fill="#f0f0f0"/></svg></div>
<svg class="abs" style="left:230px;top:488px" width="26" height="9"><path d="M2 1 L6.5 4.5 L2 8 Z M14 1 L18.5 4.5 L14 8 Z M20.5 1 V8" fill="#6c6c6c" stroke="#6c6c6c" stroke-width="1"/></svg>
<div class="abs" style="left:330px;top:487px;font-size:9px;line-height:13px;color:#d0d0d0;white-space:nowrap;">选择</div>
<svg class="abs" style="left:421px;top:488px" width="22" height="9"><path d="M2 0.5 L7 4.5 L2 8.5 Z" fill="#ddd"/><path d="M19 0.5 L14 4.5 L19 8.5 Z" fill="#eee"/></svg>
<div class="abs" style="left:608px;top:487px;width:12px;height:10px;background:#9a9a9a;"></div>
<!--/STATUS-->
<div id="vscroll" class="abs"></div>
<svg class="abs" style="left:799px;top:37px" width="10" height="7"><path d="M0.5 6 L5 0.5 L9.5 6 Z" fill="#e8e8e8"/></svg>
<div class="abs" style="left:797px;top:253px;width:12px;height:14px;background:#9c9c9c;"></div>

<div id="right" class="abs"></div>
<!--RIGHT-->
<div class="abs" style="left:810px;top:17px;width:190px;height:10px;background:#333;"></div>
<svg class="abs" style="left:988px;top:19px" width="8" height="6"><path d="M0 0 L3 3 L0 6 Z M4 0 L7 3 L4 6 Z" fill="#ccc"/></svg>
<div class="abs" style="left:812px;top:27px;width:2.5px;height:470px;background:#3d3d3d;"></div>
<!-- color panel -->
<div class="abs" style="left:812px;top:27px;width:188px;height:14px;background:#313131;"></div><div class="abs" style="left:846px;top:28px;width:80px;height:13px;background:#3a3a3a;"></div>
<div class="abs" style="left:813px;top:28px;width:33px;height:13px;background:#474747;"></div>
<svg class="abs" style="left:815px;top:30px" width="5" height="9"><path d="M0.5 3.5 L2.5 0.5 L4.5 3.5 Z M0.5 5.5 L2.5 8.5 L4.5 5.5 Z" fill="#e8e8e8"/></svg>
<div class="pt on" style="left:822px;top:28px;">颜色</div>
<div class="pt" style="left:853px;top:28px;">颜色参考</div>
<div class="pt" style="left:902px;top:28px;">描边</div>
<svg class="abs" style="left:985px;top:31px" width="12" height="8"><path d="M0 1 L4 1 L2 4 Z" fill="#ccc"/><path d="M5 1 H11 M5 3.5 H11 M5 6 H11" stroke="#bbb" stroke-width="1"/></svg>
<div class="abs" style="left:816px;top:46px;width:28px;height:28px;background:#c02c9c;border:1px solid #ecc0e4;box-sizing:border-box;"></div>
<svg class="abs" style="left:825px;top:79px" width="9" height="10"><rect x="1" y="3" width="6" height="6" fill="none" stroke="#e060c8" stroke-width="1.2"/><path d="M2.5 3 V1 H5.5 V3" fill="none" stroke="#e060c8"/></svg>
<div class="lab" style="top:50px;">C</div><div class="sl" style="top:54px;background:linear-gradient(90deg,#e8347c,#8c3c94 50%,#3c3470);"></div><svg class="abs" style="left:889px;top:57px" width="8" height="7"><path d="M4 0 L7.5 4 L7.5 6.5 L0.5 6.5 L0.5 4 Z" fill="#f2f2f2" stroke="#555" stroke-width="0.6"/></svg><div class="vb" style="top:49px;">31.02</div><div class="pc" style="top:50px;">%</div>
<div class="lab" style="top:70px;">M</div><div class="sl" style="top:74px;background:linear-gradient(90deg,#d8d8e0,#b880c0 50%,#c02c9c 85%,#a02080);"></div><svg class="abs" style="left:928px;top:77px" width="8" height="7"><path d="M4 0 L7.5 4 L7.5 6.5 L0.5 6.5 L0.5 4 Z" fill="#f2f2f2" stroke="#555" stroke-width="0.6"/></svg><div class="vb" style="top:69px;">79.58</div><div class="pc" style="top:70px;">%</div>
<div class="lab" style="top:89px;">Y</div><div class="sl" style="top:93px;background:linear-gradient(90deg,#c838a0,#d03860 50%,#c84428);"></div><svg class="abs" style="left:870px;top:96px" width="8" height="7"><path d="M4 0 L7.5 4 L7.5 6.5 L0.5 6.5 L0.5 4 Z" fill="#f2f2f2" stroke="#555" stroke-width="0.6"/></svg><div class="vb" style="top:88px;">7.35</div><div class="pc" style="top:89px;">%</div>
<div class="lab" style="top:109px;">K</div><div class="sl" style="top:113px;background:linear-gradient(90deg,#c030a0,#601850 50%,#080808);"></div><svg class="abs" style="left:865px;top:116px" width="8" height="7"><path d="M4 0 L7.5 4 L7.5 6.5 L0.5 6.5 L0.5 4 Z" fill="#f2f2f2" stroke="#555" stroke-width="0.6"/></svg><div class="vb" style="top:108px;">1.14</div><div class="pc" style="top:109px;">%</div>
<div class="abs" style="left:817px;top:131px;width:10px;height:10px;background:#fff;overflow:hidden"><svg width="10" height="10" style="position:absolute;left:0;top:0"><line x1="0" y1="10" x2="10" y2="0" stroke="#a02848" stroke-width="1.6"/></svg></div>
<div class="abs" style="left:827px;top:131px;width:10px;height:10px;background:#000;"></div>
<div class="abs" style="left:837px;top:131px;width:10px;height:10px;background:#fff;"></div>
<div class="abs" style="left:817px;top:150px;width:170px;height:17px;background:linear-gradient(180deg,rgba(255,255,255,.95) 0%,rgba(255,255,255,0) 45%,rgba(0,0,0,0) 55%,rgba(0,0,0,.95) 100%),linear-gradient(90deg,#ff0000 0%,#ff8800 10%,#ffff00 18%,#40d000 32%,#00b890 45%,#00a0e0 55%,#1010a0 68%,#9010a0 78%,#ff00c0 88%,#ff0020 100%);"></div>
<!-- layers panel -->
<div class="abs" style="left:812px;top:171px;width:188px;height:3px;background:#2e2e2e;"></div>
<div class="abs" style="left:812px;top:174px;width:188px;height:15px;background:#313131;"></div><div class="abs" style="left:813px;top:175px;width:148px;height:14px;background:#3a3a3a;"></div>
<div class="abs" style="left:874px;top:175px;width:30px;height:14px;background:#474747;"></div>
<div class="pt" style="left:817px;top:175px;">色板</div>
<div class="pt" style="left:849px;top:175px;">画笔</div>
<div class="pt on" style="left:880px;top:175px;">图层</div>
<div class="pt" style="left:910px;top:175px;">路径查找器</div>
<svg class="abs" style="left:985px;top:178px" width="12" height="8"><path d="M0 1 L4 1 L2 4 Z" fill="#ccc"/><path d="M5 1 H11 M5 3.5 H11 M5 6 H11" stroke="#bbb" stroke-width="1"/></svg>
<!--LAYERS-->
<div class="abs" style="left:816px;top:193px;width:171px;height:100px;background:#535353;border:1px solid #303030;box-sizing:border-box;"></div>
<div class="abs" style="left:987px;top:193px;width:10px;height:100px;background:#3a3a3a;"></div>
<div class="abs" style="left:888px;top:196px;width:12px;height:13px;background:radial-gradient(ellipse at 40% 45%,#c4c0c8 0%,#e6e4e8 38%,#fff 65%);"></div>
<div class="abs" style="left:905px;top:195px;font-size:10px;line-height:14px;color:#a8a8a8;white-space:nowrap;letter-spacing:1.6px;">&lt;...</div>
<svg class="abs" style="left:961px;top:196px" width="12" height="12"><circle cx="6" cy="6" r="3.6" fill="none" stroke="#dcdcdc" stroke-width="1.3"/></svg>
<div class="abs" style="left:817px;top:210.0px;width:169px;height:1px;background:#3c3c3c;"></div>
<div class="abs" style="left:888px;top:212.5px;width:12px;height:13px;background:linear-gradient(100deg,#fff 28%,#e870a8 42%,#fff 52%,#f4b8d4 62%,#fff 74%);"></div>
<div class="abs" style="left:905px;top:211.5px;font-size:10px;line-height:14px;color:#a8a8a8;white-space:nowrap;letter-spacing:1.6px;">&lt;...</div>
<svg class="abs" style="left:961px;top:212.5px" width="12" height="12"><circle cx="6" cy="6" r="3.6" fill="none" stroke="#dcdcdc" stroke-width="1.3"/></svg>
<div class="abs" style="left:817px;top:226.5px;width:169px;height:1px;background:#3c3c3c;"></div>
<div class="abs" style="left:888px;top:229px;width:12px;height:13px;background:radial-gradient(ellipse at 45% 55%,#de4888 0%,#f0a0c4 45%,#fff 72%);"></div>
<div class="abs" style="left:905px;top:228px;font-size:10px;line-height:14px;color:#a8a8a8;white-space:nowrap;letter-spacing:1.6px;">&lt;...</div>
<svg class="abs" style="left:961px;top:229px" width="12" height="12"><circle cx="6" cy="6" r="3.6" fill="none" stroke="#dcdcdc" stroke-width="1.3"/></svg>
<div class="abs" style="left:817px;top:243.0px;width:169px;height:1px;background:#3c3c3c;"></div>
<div class="abs" style="left:888px;top:245.5px;width:12px;height:13px;background:linear-gradient(135deg,#fff 22%,#c48ab4 38%,#e8c8e0 48%,#fff 60%);"></div>
<div class="abs" style="left:905px;top:244.5px;font-size:10px;line-height:14px;color:#a8a8a8;white-space:nowrap;letter-spacing:1.6px;">&lt;...</div>
<svg class="abs" style="left:961px;top:245.5px" width="12" height="12"><circle cx="6" cy="6" r="3.6" fill="#777" stroke="#dcdcdc" stroke-width="2"/></svg>
<svg class="abs" style="left:818px;top:246.5px" width="14" height="10"><path d="M1 5 Q7 -1.5 13 5 Q7 11.5 1 5 Z" fill="none" stroke="#d8d8d8" stroke-width="1.3"/><circle cx="7" cy="5" r="2.2" fill="#d8d8d8"/></svg>
<div class="abs" style="left:817px;top:259.5px;width:169px;height:1px;background:#3c3c3c;"></div>
<div class="abs" style="left:888px;top:262px;width:12px;height:13px;background:radial-gradient(ellipse at 40% 42%,#8848a0 0%,#c8a0d0 40%,#fff 68%);"></div>
<div class="abs" style="left:905px;top:261px;font-size:10px;line-height:14px;color:#a8a8a8;white-space:nowrap;letter-spacing:1.6px;">&lt;...</div>
<svg class="abs" style="left:961px;top:262px" width="12" height="12"><circle cx="6" cy="6" r="3.6" fill="none" stroke="#dcdcdc" stroke-width="1.3"/></svg>
<svg class="abs" style="left:818px;top:263px" width="14" height="10"><path d="M1 5 Q7 -1.5 13 5 Q7 11.5 1 5 Z" fill="none" stroke="#d8d8d8" stroke-width="1.3"/><circle cx="7" cy="5" r="2.2" fill="#d8d8d8"/></svg>
<div class="abs" style="left:817px;top:276.0px;width:169px;height:1px;background:#3c3c3c;"></div>
<div class="abs" style="left:888px;top:278.5px;width:12px;height:13px;background:linear-gradient(160deg,#fff 30%,#80c0c8 45%,#fff 62%);"></div>
<div class="abs" style="left:905px;top:277.5px;font-size:10px;line-height:14px;color:#a8a8a8;white-space:nowrap;letter-spacing:1.6px;">&lt;...</div>
<svg class="abs" style="left:961px;top:278.5px" width="12" height="12"><circle cx="6" cy="6" r="3.6" fill="none" stroke="#dcdcdc" stroke-width="1.3"/></svg>
<svg class="abs" style="left:818px;top:279.5px" width="14" height="10"><path d="M1 5 Q7 -1.5 13 5 Q7 11.5 1 5 Z" fill="none" stroke="#d8d8d8" stroke-width="1.3"/><circle cx="7" cy="5" r="2.2" fill="#d8d8d8"/></svg>
<div class="abs" style="left:832.5px;top:194px;width:1px;height:98px;background:#3c3c3c;"></div>
<div class="abs" style="left:958px;top:194px;width:1px;height:98px;background:#3c3c3c;"></div>
<div class="abs" style="left:850px;top:194px;width:4px;height:98px;background:#5868c8;"></div>
<div class="abs" style="left:975px;top:248px;width:6px;height:6px;background:#3858c8;border:1px solid #90a8f0;box-sizing:border-box;"></div>
<svg class="abs" style="left:988px;top:196px" width="8" height="6"><path d="M0.5 5 L4 0.5 L7.5 5 Z" fill="#e8e8e8"/></svg>
<svg class="abs" style="left:988px;top:284px" width="8" height="6"><path d="M0.5 1 L4 5.5 L7.5 1 Z" fill="#e8e8e8"/></svg>
<div class="abs" style="left:988px;top:228px;width:8px;height:20px;background:#a4a4a4;"></div>
<div class="abs" style="left:817px;top:294px;font-size:10px;line-height:14px;color:#e0e0e0;white-space:nowrap;">1 个图层</div>
<svg class="abs" style="left:888px;top:295px" width="12" height="12"><circle cx="7" cy="4.5" r="3.2" fill="none" stroke="#e0e0e0" stroke-width="1.4"/><path d="M4.8 7 L1 11" stroke="#e0e0e0" stroke-width="1.8"/></svg>
<svg class="abs" style="left:907px;top:295px" width="12" height="12"><rect x="1.5" y="1.5" width="8" height="8" fill="none" stroke="#ddd" stroke-width="1.2"/><rect x="4" y="4" width="4" height="4" fill="#ddd"/><path d="M3 11 H11 V4" stroke="#bbb" fill="none"/></svg>
<svg class="abs" style="left:927px;top:295px" width="16" height="12"><path d="M1 2 V5 H5" stroke="#ddd" fill="none" stroke-width="1.2"/><rect x="7" y="3" width="6" height="7" fill="#ddd"/><path d="M6 3 H14" stroke="#ddd" stroke-width="1.5"/></svg>
<svg class="abs" style="left:949px;top:295px" width="12" height="12"><rect x="2" y="2" width="7" height="8" fill="#ddd"/><path d="M9 2 L9 5 L6 2 Z" fill="#777"/></svg>
<svg class="abs" style="left:968px;top:295px" width="12" height="12"><rect x="2.5" y="3" width="7" height="8" fill="none" stroke="#666" stroke-width="1.2"/><path d="M1 2.5 H11 M4 1 H8" stroke="#666" stroke-width="1.2"/></svg>
<!--/LAYERS-->
<!--GRADPANEL-->
<div class="abs" style="left:812px;top:308px;width:188px;height:3px;background:#2e2e2e;"></div>
<div class="abs" style="left:812px;top:311px;width:188px;height:15px;background:#313131;"></div><div class="abs" style="left:846px;top:312px;width:40px;height:14px;background:#3a3a3a;"></div>
<div class="abs" style="left:813px;top:312px;width:33px;height:14px;background:#474747;"></div>
<svg class="abs" style="left:815px;top:314px" width="5" height="9"><path d="M0.5 3.5 L2.5 0.5 L4.5 3.5 Z M0.5 5.5 L2.5 8.5 L4.5 5.5 Z" fill="#e8e8e8"/></svg>
<div class="pt on" style="left:822px;top:312px;">渐变</div>
<div class="pt" style="left:852px;top:312px;color:#888">透明度</div>
<svg class="abs" style="left:985px;top:303px" width="15" height="30"><circle cx="19.5" cy="15" r="13.5" fill="#38b050" stroke="#d8f0dc" stroke-width="1.5"/></svg>
<div class="abs" style="left:817px;top:331px;width:23px;height:22px;background:linear-gradient(90deg,#b040a0 0%,#c868b8 25%,#f0b8e8 50%,#c868b8 75%,#b040a0 100%);"></div>
<svg class="abs" style="left:844px;top:340px" width="6" height="4"><path d="M0 0 L5 0 L2.5 3 Z" fill="#ddd"/></svg>
<div class="abs" style="left:856px;top:332px;font-size:10px;line-height:13px;color:#e4e4e4;white-space:nowrap;letter-spacing:0.5px;">类型:</div>
<div class="abs" style="left:885px;top:332px;width:111px;height:12px;background:#626262;"><div style="position:absolute;left:5px;top:0;font-size:10px;line-height:12px;color:#eee;">线性</div><svg style="position:absolute;left:100px;top:3px" width="8" height="6"><path d="M0.5 0.5 L7.5 0.5 L4 5 Z" fill="#f0f0f0"/></svg></div>
<div class="abs" style="left:856px;top:352px;font-size:10px;line-height:13px;color:#7a7a7a;white-space:nowrap;letter-spacing:0.5px;">描边:</div>
<svg class="abs" style="left:885px;top:352px" width="54" height="14"><g fill="none" stroke="#686868" stroke-width="1.2"><rect x="0.5" y="0.5" width="16" height="13"/><rect x="18.5" y="0.5" width="16" height="13"/><rect x="36.5" y="0.5" width="16" height="13"/><path d="M5 11 V4 H13 M23 11 V4 H31 M27 11 V7 M41 11 V4 H49 M41 7.5 H49"/></g></svg>
<div class="abs" style="left:825px;top:368px;width:15px;height:14px;background:#fff;overflow:hidden;"><svg width="15" height="14" style="position:absolute;left:0;top:0"><line x1="0" y1="14" x2="15" y2="0" stroke="#d02030" stroke-width="1.6"/></svg><div style="position:absolute;left:4px;top:4px;width:7px;height:6px;background:#333;"></div></div>
<div class="abs" style="left:817px;top:359px;width:14px;height:14px;background:linear-gradient(90deg,#b040a0 0%,#f0b8e8 50%,#b040a0 100%);"></div>
<svg class="abs" style="left:869px;top:376px" width="12" height="8"><path d="M1 6.5 H11 L6 1 Z" fill="none" stroke="#ddd" stroke-width="1.1"/><path d="M1 7.5 H11" stroke="#bbb" stroke-width="1" stroke-dasharray="1.5 1"/></svg>
<div class="abs" style="left:885px;top:373px;width:41px;height:13px;background:#a2a2a2;"><div style="position:absolute;left:2px;top:0;font-size:9.5px;line-height:12px;color:#222;">-20°</div></div>
<div class="abs" style="left:927px;top:373px;width:10px;height:13px;background:#5c5c5c;"><svg style="position:absolute;left:1.5px;top:4px" width="8" height="6"><path d="M0.5 0.5 L7.5 0.5 L4 5 Z" fill="#f0f0f0"/></svg></div>
<svg class="abs" style="left:822px;top:391px" width="14" height="12"><rect x="1" y="1" width="7" height="4" fill="none" stroke="#ccc"/><path d="M10 3 H13 M2 8.5 H5 M3.5 7 V10" stroke="#ccc"/><rect x="7" y="7" width="5" height="4" fill="#bbb"/></svg>
<div class="abs" style="left:885px;top:393px;width:41px;height:14px;background:#707070;"></div>
<div class="abs" style="left:927px;top:393px;width:10px;height:14px;background:#585858;"><svg style="position:absolute;left:1.5px;top:4px" width="8" height="6"><path d="M0.5 0.5 L7.5 0.5 L4 5 Z" fill="#888"/></svg></div>
<svg class="abs" style="left:928px;top:411px" width="7" height="7"><path d="M3.5 0.5 L6.5 3.5 L3.5 6.5 L0.5 3.5 Z" fill="#ddd"/></svg>
<div class="abs" style="left:819px;top:419px;width:154px;height:20px;background:linear-gradient(90deg,#c848b0 0%,#e89cd8 30%,#eeb0e0 50%,#d060bc 80%,#c038a8 100%);"></div>
<svg class="abs" style="left:982px;top:421px" width="11" height="12"><rect x="2" y="3.5" width="7" height="8" fill="none" stroke="#ccc" stroke-width="1.2"/><path d="M0.5 3 H10.5 M3.5 1 H7.5 M4 5 V10 M7 5 V10" stroke="#ccc" stroke-width="1.1"/></svg>
<svg class="abs" style="left:968px;top:437px" width="10" height="12"><path d="M5 0.5 L9 4 V11 H1 V4 Z" fill="#d890cc" stroke="#f0c8e8" stroke-width="1"/><rect x="3" y="6" width="4" height="4" fill="#a83898"/></svg>
<svg class="abs" style="left:814px;top:437px" width="10" height="12"><path d="M5 0.5 L9 4 V11 H1 V4 Z" fill="#e8b8e0" stroke="#f0d0ec" stroke-width="1"/></svg>
<div class="abs" style="left:885px;top:463px;width:41px;height:11px;background:#8a8a8a;"></div>
<div class="abs" style="left:856px;top:480px;font-size:10px;line-height:13px;color:#e4e4e4;white-space:nowrap;letter-spacing:0.5px;">位置:</div>
<div class="abs" style="left:885px;top:480px;width:41px;height:13px;background:#a2a2a2;"><div style="position:absolute;left:2px;top:0;font-size:9.5px;line-height:13px;color:#222;">0%</div></div>
<div class="abs" style="left:927px;top:480px;width:10px;height:13px;background:#5c5c5c;"><svg style="position:absolute;left:1.5px;top:4px" width="8" height="6"><path d="M0.5 0.5 L7.5 0.5 L4 5 Z" fill="#f0f0f0"/></svg></div>
<!--WATERMARK-->
<svg class="abs" style="left:812px;top:385px" width="160" height="95" viewBox="812 385 160 95">
<g fill="#cbcbcb"><ellipse cx="849.5" cy="399" rx="6" ry="8" transform="rotate(8 849.5 399)"/><ellipse cx="865" cy="401" rx="6" ry="7.8" transform="rotate(12 865 401)"/><ellipse cx="835.5" cy="411" rx="5.6" ry="7.2" transform="rotate(-12 835.5 411)"/><ellipse cx="876.5" cy="415.5" rx="5.2" ry="6.8" transform="rotate(20 876.5 415.5)"/></g>
<path d="M835.5 441 Q832 428 841 421 Q848 411.5 856.5 413.5 Q866 414.5 871.5 424 Q879 432 877 442 Z" fill="#ecaede" stroke="#fff" stroke-width="3"/>
<text x="840" y="439.5" font-family="Liberation Sans,sans-serif" font-weight="bold" font-size="22" fill="#fff" textLength="32" lengthAdjust="spacingAndGlyphs">du</text>
<text x="819" y="443" font-family="Liberation Sans,sans-serif" font-weight="bold" font-size="35" fill="#fff">i</text>
<text x="881" y="442" font-family="Liberation Sans,Noto Sans CJK SC,sans-serif" font-weight="bold" font-size="30" fill="#fff" textLength="61" lengthAdjust="spacingAndGlyphs">经验</text>
<text x="820.5" y="470.5" font-family="Liberation Sans,sans-serif" font-weight="bold" font-size="17" fill="#fff" textLength="124" lengthAdjust="spacingAndGlyphs">jingyan.baidu.com</text>
<path d="M814 461 L814 452 Q822 447 834 443.5 Q850 439.5 880 440.5 L942 440.5 L942 461 Z" fill="#6a6a6a"/>
<path d="M814 461 L814 450 Q818 447 824 446 L822 461 Z" fill="#a86a98"/>
<rect x="942" y="447" width="16" height="14" fill="#343434"/>
</svg>
<!--/WATERMARK-->
<!--/GRADPANEL-->
<!--/RIGHT-->
</body>
</html>
